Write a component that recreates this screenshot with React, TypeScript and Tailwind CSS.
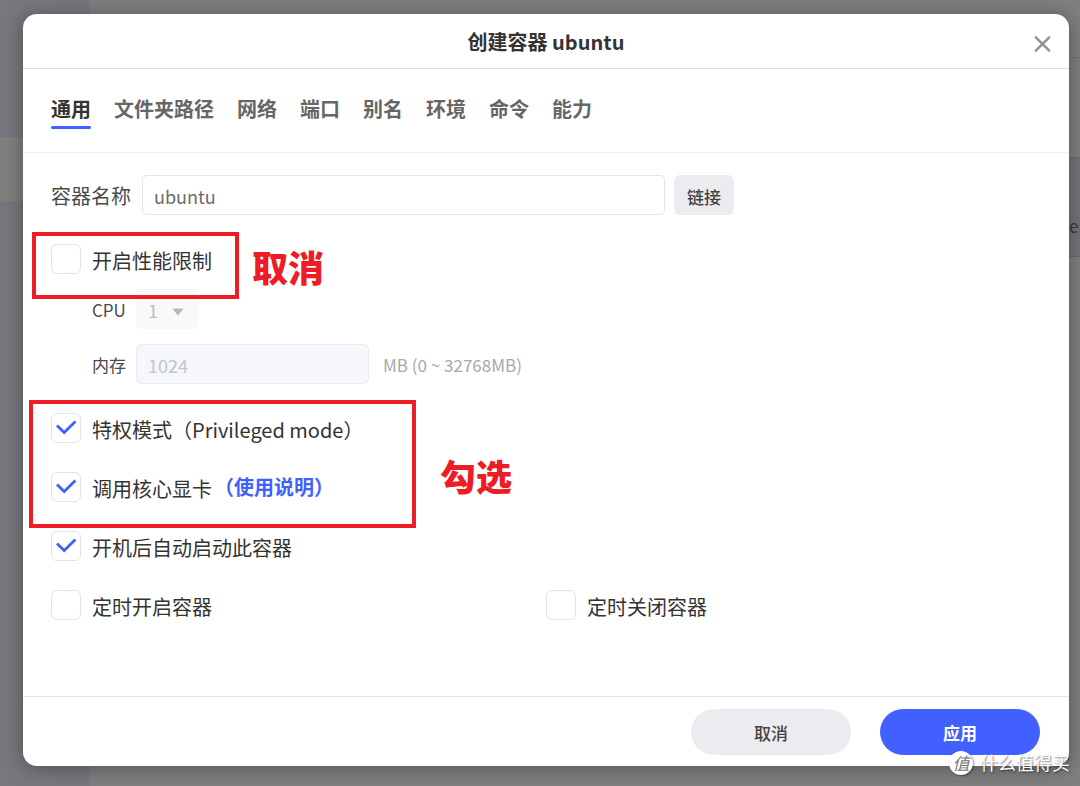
import { useState } from 'react'

const TABS = ['通用', '文件夹路径', '网络', '端口', '别名', '环境', '命令', '能力']

interface CheckOptionProps {
  id: string
  label: string
  defaultChecked?: boolean
}

function CheckOption({ id, label, defaultChecked = false }: CheckOptionProps) {
  return (
    <div className="flex h-[30px] items-start gap-[11px]">
      <span className="grid h-[30px] w-[30px] shrink-0">
        <input
          id={id}
          type="checkbox"
          defaultChecked={defaultChecked}
          className="peer col-start-1 row-start-1 h-[30px] w-[30px] appearance-none rounded-[6px] border border-[#e2e2ea] bg-white"
        />
        <svg
          viewBox="0 0 30 30"
          className="pointer-events-none invisible col-start-1 row-start-1 h-[30px] w-[30px] peer-checked:visible"
          fill="none"
          stroke="#4060ff"
          strokeWidth="2.8"
        >
          <path d="M6 12.4 13.2 19.6 24.4 8.6" />
        </svg>
      </span>
      <label htmlFor={id} className="text-[20px] leading-[34px] text-[#333333]">
        {label}
      </label>
    </div>
  )
}

// Dimmed page behind the dialog
function Backdrop() {
  return (
    <div className="absolute inset-0 flex bg-[#7f7f7f]" aria-hidden="true">
      <div className="w-[90px] bg-[#77787d] pt-[137px]">
        <div className="h-16 bg-[#7f7f7d]"></div>
      </div>
      <div className="flex-1">
        <div className="h-[58px] border-b border-[#727272]"></div>
        <div className="h-[100px] border-b border-[#727272]"></div>
        <div className="flex h-[99px] items-center justify-end border-b border-[#6c6c6e] bg-[#737378] pt-[38px] text-[17px] text-[#3a3a3c]">
          <span className="-mr-[5px]">er</span>
        </div>
      </div>
    </div>
  )
}

function Watermark() {
  return (
    <div className="pointer-events-none absolute right-[10px] bottom-[11px] flex items-start gap-[7px]">
      <span className="flex h-6 w-6 items-center justify-center rounded-full bg-white text-[17px] leading-6 text-[#777777] italic shadow-[1px_1px_2px_rgba(0,0,0,0.45)]">
        值
      </span>
      <span className="text-[18px] leading-[22px] text-white [text-shadow:1px_1px_2px_rgba(0,0,0,0.55)]">什么值得买</span>
    </div>
  )
}

export default function App() {
  const [activeTab, setActiveTab] = useState('通用')

  return (
    <div className="relative flex min-h-screen flex-col overflow-hidden pt-[14px] pr-[11px] pb-[20px] pl-[23px] font-['Noto_Sans_CJK_SC',sans-serif]">
      <Backdrop />

      <div
        role="dialog"
        aria-labelledby="dialog-title"
        className="relative flex flex-1 flex-col rounded-[14px] bg-white shadow-[0_2px_20px_rgba(0,0,0,0.35)]"
      >
        <header className="grid grid-cols-[1fr_auto_1fr] items-center border-b border-[#dfdfe1] px-4">
          <h1 id="dialog-title" className="col-start-2 pt-1 pb-[2px] text-[20px] leading-[48px] font-bold text-[#333333]">
            创建容器 ubuntu
          </h1>
          <button type="button" aria-label="关闭" className="justify-self-end pt-[6px] text-[#8f9198]">
            <svg viewBox="0 0 22 22" className="h-[22px] w-[22px]" fill="none" stroke="currentColor" strokeWidth="2.4" strokeLinecap="round">
              <path d="M4.8 4.3 18.2 17.7M18.2 4.3 4.8 17.7" />
            </svg>
          </button>
        </header>

        <nav className="flex gap-[23px] border-b border-[#eeeeef] px-7 pt-6 pb-[23px]">
          {TABS.map((tab) => (
            <button
              key={tab}
              type="button"
              onClick={() => setActiveTab(tab)}
              className={`text-[20px] leading-[32px] font-bold ${
                activeTab === tab ? 'text-[#333333]' : 'text-[#666666]'
              }`}
            >
              {tab}
              <span
                className={`mt-px block h-[3px] rounded-full ${activeTab === tab ? 'bg-[#4060ff]' : 'bg-transparent'}`}
              ></span>
            </button>
          ))}
        </nav>

        <form className="flex flex-1 flex-col gap-[29px] px-7 pt-[22px]">
          <div className="flex items-center">
            <label htmlFor="name" className="mr-[11px] pt-[2px] text-[20px] leading-[38px] text-[#4a4a4a]">
              容器名称
            </label>
            <input
              id="name"
              type="text"
              defaultValue="ubuntu"
              className="h-10 min-w-0 max-w-[523px] flex-1 rounded-[5px] border border-[#e4e4ee] px-[11px] pt-[2px] text-[18px] text-[#6b6b6b]"
            />
            <button type="button" className="ml-[9px] h-10 rounded-[6px] bg-[#ebebf0] px-[13px] pt-1 text-[17px] font-medium text-[#444444]">
              链接
            </button>
          </div>

          <div className="relative flex flex-col gap-[15px]">
            <CheckOption id="limit" label="开启性能限制" />
            <div className="flex items-center gap-[10px] pl-[41px]">
              <label htmlFor="cpu" className="pt-[2px] text-[17px] text-[#4a4a4a]">
                CPU
              </label>
              <span className="grid items-center">
                <select
                  id="cpu"
                  disabled
                  className="col-start-1 row-start-1 h-10 w-[63px] appearance-none rounded-[6px] bg-[#f9f9fb] pt-[2px] pl-3 text-[18px] text-[#bcbcbc] opacity-100"
                >
                  <option>1</option>
                </select>
                <svg viewBox="0 0 12 8" className="pointer-events-none col-start-1 row-start-1 mt-[6px] mr-[15px] h-2 w-3 justify-self-end" fill="#b8b8b8">
                  <path d="M.4.6h11.2L6 7.4z" />
                </svg>
              </span>
            </div>
            <div className="flex items-center gap-[10px] pl-[41px]">
              <label htmlFor="memory" className="pt-[2px] text-[17px] text-[#4a4a4a]">
                内存
              </label>
              <input
                id="memory"
                type="text"
                disabled
                defaultValue="1024"
                className="h-10 w-[233px] rounded-[5px] border border-[#e7eaf2] bg-[#f5f7fb] px-[11px] pt-[2px] text-[18px] text-[#c0c4cc]"
              />
              <span className="pt-[2px] pl-1 text-[17px] text-[#a8a8a8]">MB (0 ~ 32768MB)</span>
            </div>
            <div className="pointer-events-none absolute -top-3 -left-[19px] h-[67px] w-[207px] border-4 border-[#ee1c25]"></div>
            <strong className="absolute top-0 left-[201px] text-[36px] leading-[44px] font-black text-[#ee1c25]">取消</strong>
          </div>

          <div className="relative flex flex-col gap-[29px]">
            <CheckOption id="privileged" label="特权模式（Privileged mode）" defaultChecked />
            <div className="flex items-start gap-[2px]">
              <CheckOption id="gpu" label="调用核心显卡" defaultChecked />
              <a href="#guide" className="text-[20px] leading-[30px] font-bold text-[#4060ff]">
                （使用说明）
              </a>
            </div>
            <div className="pointer-events-none absolute -top-[13px] -left-[22px] h-[128px] w-[387px] border-4 border-[#ee1c25]"></div>
            <strong className="absolute top-10 left-[389px] text-[36px] leading-[44px] font-black text-[#ee1c25]">勾选</strong>
          </div>

          <CheckOption id="autostart" label="开机后自动启动此容器" defaultChecked />

          <div className="grid grid-cols-2">
            <CheckOption id="timed-start" label="定时开启容器" />
            <CheckOption id="timed-stop" label="定时关闭容器" />
          </div>
        </form>

        <footer className="flex justify-end gap-[29px] border-t border-[#e4e4e5] px-[29px] pt-3 pb-[11px]">
          <button type="button" className="h-[46px] w-40 rounded-full bg-[#ebebf0] pt-px text-[17px] font-medium text-[#444444]">
            取消
          </button>
          <button type="button" className="h-[46px] w-40 rounded-full bg-[#4260ff] pt-px text-[17px] font-bold text-white">
            应用
          </button>
        </footer>
      </div>

      <Watermark />
    </div>
  )
}
